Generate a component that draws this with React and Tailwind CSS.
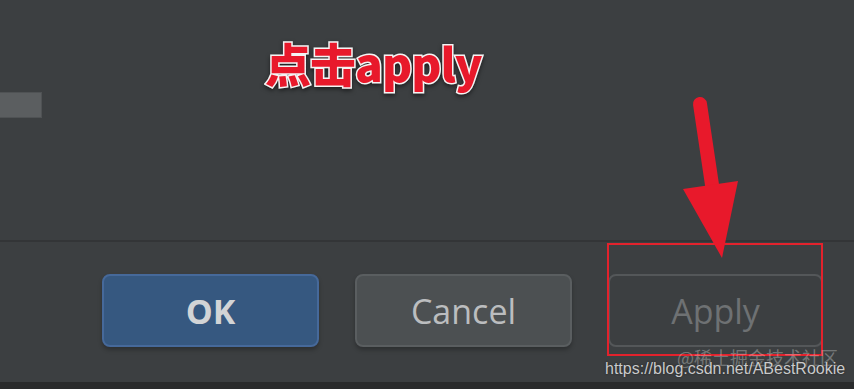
import React from 'react';

function Arrow() {
  return (
    <svg className="absolute left-0 top-0 pointer-events-none" width="854" height="389" viewBox="0 0 854 389">
      <line x1="700" y1="104" x2="715" y2="205" stroke="#e8192b" strokeWidth="14" strokeLinecap="round" />
      <polygon points="683,189 738,181 722,258" fill="#e8192b" />
    </svg>
  );
}

function DialogButton({ label, className, textClass }) {
  return (
    <button className={`h-[73px] rounded-lg border-2 flex items-center justify-center ${className}`}>
      <span className={`text-[34px] leading-none ${textClass}`}>{label}</span>
    </button>
  );
}

export default function App() {
  return (
    <div className="relative w-[854px] h-[389px] overflow-hidden bg-[#3c3f41] font-['Open_Sans','Noto_Sans',sans-serif]">
      {/* upper settings area */}
      <div className="h-[240px] pt-[92px]">
        <div className="w-[42px] h-[26px] bg-[#5b5e60] border-y border-r border-[#4f5254]" />
      </div>

      <div className="h-[2px] bg-[#333537]" />

      {/* dialog buttons */}
      <div className="h-[140px] pt-[32px] pl-[102px] flex gap-[36px]">
        <DialogButton
          label="OK"
          className="w-[217px] bg-[#365880] border-[#46699a] shadow-[0_3px_4px_rgba(0,0,0,0.25)]"
          textClass="font-bold text-[#d2d4d6]"
        />
        <DialogButton
          label="Cancel"
          className="w-[217px] bg-[#4c5052] border-[#5a5e60] shadow-[0_3px_4px_rgba(0,0,0,0.25)]"
          textClass="text-[#bbbdbf]"
        />
        <DialogButton
          label="Apply"
          className="w-[215px] bg-[#3c3f41] border-[#545759]"
          textClass="text-[#6e7173]"
        />
      </div>

      <div className="h-[7px] bg-[#2a2b2c]" />

      {/* annotations */}
      <div className="absolute left-[265px] top-[39px] text-[46px] font-black leading-none text-[#e8192b] tracking-[-1px] font-['Noto_Sans_CJK_SC','Noto_Sans',sans-serif] [-webkit-text-stroke:3px_#f4f4f4] [paint-order:stroke_fill] drop-shadow-[0_2px_2px_rgba(0,0,0,0.5)]">
        点击apply
      </div>

      <div className="absolute left-[607px] top-[243px] w-[216px] h-[113px] border-2 border-[#e2222c]" />

      <Arrow />

      <div className="absolute left-[677px] top-[348px] text-[18px] leading-none text-white/30 font-['Noto_Sans_CJK_SC',sans-serif]">
        @稀土掘金技术社区
      </div>
      <div className="absolute left-[605px] top-[361px] text-[16px] leading-none text-[#c9cacb] font-['Liberation_Sans',sans-serif] [text-shadow:0_0_2px_#222]">
        https://blog.csdn.net/ABestRookie
      </div>
    </div>
  );
}
